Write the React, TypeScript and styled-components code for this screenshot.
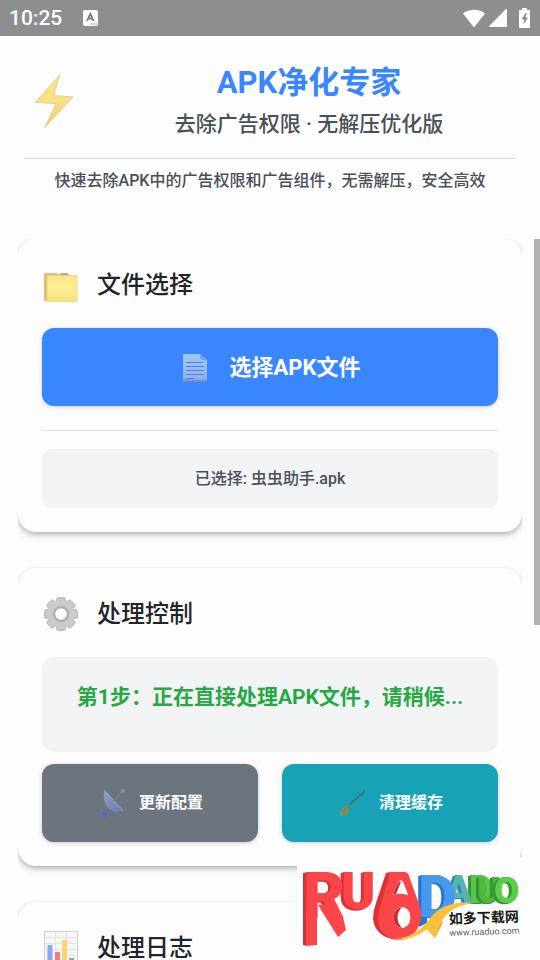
import React from "react";
import styled, { createGlobalStyle, css } from "styled-components";

const GlobalStyle = createGlobalStyle`
  * { box-sizing: border-box; }
  html, body { margin: 0; background: #fdfdfd; }
  body, button {
    font-family: Roboto, "Noto Sans CJK SC", sans-serif;
    color: #212529;
  }
  h1, h2, p { margin: 0; }
`;

const Page = styled.div`
  display: flex;
  flex-direction: column;
  height: 100vh;
  overflow: hidden;
`;

const StatusBar = styled.div`
  display: flex;
  align-items: center;
  height: 36px;
  flex: none;
  padding: 0 10px 0 9px;
  background: #8d8e8f;
  color: #fff;
`;

const Clock = styled.span`
  flex: none;
  margin-right: 21px;
  font-size: 21px;
  line-height: 36px;
  font-weight: 500;
`;

const StatusIcons = styled.div`
  display: flex;
  align-items: center;
  gap: 4px;
  margin-left: auto;
`;

const Header = styled.header`
  flex: none;
  padding: 25px 24px 46px;
`;

const Brand = styled.div`
  display: flex;
  align-items: center;
  padding-bottom: 15px;
  border-bottom: 1px solid #dcddde;
`;

const BrandText = styled.div`
  flex: 1;
  text-align: center;
  padding-left: 18px;
`;

const AppTitle = styled.h1`
  font-size: 31px;
  line-height: 44px;
  font-weight: 700;
  color: #3a86ff;
`;

const Subtitle = styled.p`
  font-size: 21px;
  line-height: 38px;
  font-weight: 500;
  color: #495057;
`;

const Intro = styled.p`
  padding-top: 10px;
  font-size: 16px;
  line-height: 24px;
  font-weight: 500;
  text-align: center;
  color: #495057;
`;

const ScrollArea = styled.div`
  display: flex;
  flex: 1;
  min-height: 0;
  gap: 12px;
  padding-left: 18px;
`;

const Cards = styled.main`
  display: flex;
  flex-direction: column;
  flex: 1;
  gap: 36px;
  overflow: hidden;
`;

const Scrollbar = styled.div`
  display: flex;
  width: 6px;
`;

const Thumb = styled.div`
  flex: 1;
  height: 386px;
  background: #b1b1b1;
`;

const Card = styled.section`
  flex: none;
  padding: 24px;
  border-radius: 18px;
  background: #fdfdfd;
  box-shadow: 0 2px 4px rgba(0, 0, 0, 0.2), 0 4px 8px rgba(0, 0, 0, 0.12);
`;

const CardHeader = styled.div`
  display: flex;
  align-items: center;
  gap: 17px;
  height: 44px;
  margin-bottom: 21px;
`;

const CardTitle = styled.h2`
  font-size: 24px;
  line-height: 36px;
  font-weight: 500;
`;

const tones = { primary: "#3a86ff", muted: "#6c757d", info: "#17a2b8" };

const ActionButton = styled.button<{ $tone: keyof typeof tones; $large?: boolean }>`
  display: flex;
  align-items: center;
  justify-content: center;
  gap: ${(p) => (p.$large ? 20 : 12)}px;
  width: 100%;
  height: 78px;
  padding: 0 12px;
  border: 0;
  border-radius: 12px;
  background: ${(p) => tones[p.$tone]};
  color: #fff;
  font-size: ${(p) => (p.$large ? 22 : 16)}px;
  font-weight: 700;
  box-shadow: 0 1px 4px rgba(0, 0, 0, 0.2);
`;

const ButtonLabel = styled.span`
  padding-bottom: 4px;
`;

const Divider = styled.hr`
  height: 1px;
  margin: 24px 0 18px;
  border: 0;
  background: #dfe1e3;
`;

const Notice = styled.div<{ $progress?: boolean }>`
  border-radius: 9px;
  background: #f1f3f5;
  padding: 18px 12px;
  font-size: 16px;
  line-height: 23px;
  font-weight: 500;
  text-align: center;
  color: #495057;
  ${(p) =>
    p.$progress &&
    css`
      min-height: 95px;
      margin-bottom: 12px;
      padding: 24px 12px;
      border-radius: 12px;
      font-size: 21px;
      line-height: 32px;
      font-weight: 700;
      color: #28a745;
    `}
`;

const ButtonRow = styled.div`
  display: grid;
  grid-template-columns: 1fr 1fr;
  gap: 24px;
`;

const Watermark = styled.div`
  position: fixed;
  right: 0;
  bottom: 0;
  background: #fdfdfd;
  line-height: 0;
`;

const InputIcon = () => (
  <svg width="15" height="16" viewBox="0 0 15 16" aria-hidden="true">
    <rect width="15" height="16" rx="2" fill="#fff" />
    <path d="M4 11 7.3 3.8 10.6 11M5.2 8.6h4.2" fill="none" stroke="#77797b" strokeWidth="1.7" />
    <path d="M8 14h1.4M10.4 14h1.4M12.7 14h1.2" stroke="#77797b" strokeWidth="1.2" />
  </svg>
);

const WifiIcon = () => (
  <svg width="22" height="19" viewBox="0 0 22 19" aria-hidden="true">
    <path d="M0 4.500C6-.5 16-.5 22 4.500L11 18.500Z" fill="#fff" />
  </svg>
);

const SignalIcon = () => (
  <svg width="18" height="18" viewBox="0 0 18 18" aria-hidden="true">
    <path d="M17 0Q18 0 18 1v17H1Q-.5 18 .5 16.800Z" fill="#fff" />
  </svg>
);

const BatteryIcon = () => (
  <svg width="19" height="20" viewBox="0 0 19 20" aria-hidden="true">
    <path d="M11 0h5v2h2q1 0 1 1v16q0 1-1 1H9q-1 0-1-1V3q0-1 1-1h2Z" fill="#fff" />
    <path d="m14.800 5-4.300 6.200h2.700l-.8 5.300 4.600-7h-2.700l1.500-4.500Z" fill="#858789" />
  </svg>
);

const BoltIcon = () => (
  <svg width="60" height="60" viewBox="0 0 60 60" aria-hidden="true">
    <defs>
      <linearGradient id="bolt" x1="0" y1="0" x2="0" y2="1">
        <stop offset="0" stopColor="#f4ea72" />
        <stop offset=".5" stopColor="#fbdf85" />
        <stop offset="1" stopColor="#eccf63" />
      </linearGradient>
    </defs>
    <path d="M35.800 3 11.200 30.500 32 31.500 20.800 55.500 49 25 29.500 23.500Z" fill="url(#bolt)" stroke="#d9d2a0" strokeWidth="1" strokeLinejoin="round" />
  </svg>
);

const FolderIcon = () => (
  <svg width="38" height="38" viewBox="0 -2 38 38" aria-hidden="true">
    <defs>
      <linearGradient id="folder" x1="0" y1="0" x2="0" y2="1">
        <stop offset="0" stopColor="#fbe38b" />
        <stop offset=".5" stopColor="#fff094" />
        <stop offset="1" stopColor="#f8df7b" />
      </linearGradient>
    </defs>
    <path d="M2 6q0-1 2-1h10l3 1h9l1 3v24H3q-1 0-1-1Z" fill="#e6bd78" />
    <path d="M18 5h8l1 3H20Z" fill="#b7ab9c" />
    <path d="M5 8.500q0-1 1-1h28q1 0 1 1v24q0 1-1 1H5Z" fill="url(#folder)" stroke="#edcf75" strokeWidth=".7" />
  </svg>
);

const DocumentIcon = () => (
  <svg width="30" height="34" viewBox="0 -1 30 34" aria-hidden="true">
    <defs>
      <linearGradient id="document" x1="0" y1="0" x2="0" y2="1">
        <stop offset="0" stopColor="#a2c8fb" />
        <stop offset=".85" stopColor="#8fb6f4" />
        <stop offset="1" stopColor="#6787bf" />
      </linearGradient>
    </defs>
    <path d="M3 4q0-1 1-1h16l7 6v22H3Z" fill="url(#document)" />
    <path d="M20 3v4q0 2 2 2h5Z" fill="#6fa1ef" />
    <path d="M6 11.500h17M6 15.500h18M6 19.500h18M6 23.500h18M6 27.500h8" stroke="#587ed1" strokeWidth="1.100" />
  </svg>
);

const GearIcon = () => (
  <svg width="38" height="38" viewBox="0 0 38 38" aria-hidden="true">
    <g fill="#c9c9c9" stroke="#acacac" strokeWidth=".8">
      {[0, 45, 90, 135].map((a) => (
        <rect key={a} x="14.500" y="2.500" width="9" height="33" rx="2" transform={`rotate(${a} 19 19)`} />
      ))}
    </g>
    <circle cx="19" cy="19" r="10" fill="none" stroke="#cbcbcb" strokeWidth="7" />
    <circle cx="19" cy="19" r="7" fill="#fdfdfd" stroke="#b0b0b0" strokeWidth="2.500" />
  </svg>
);

const DishIcon = () => (
  <svg width="30" height="34" viewBox="0 0 30 34" aria-hidden="true">
    <defs>
      <linearGradient id="dish" x1="0" y1="0" x2="1" y2="1">
        <stop offset="0" stopColor="#949eb5" />
        <stop offset="1" stopColor="#6879b6" />
      </linearGradient>
    </defs>
    <path d="m5 24 5 1 3 6H2l1-4Z" fill="#6672a8" />
    <path d="M7.500 4Q5 14 11 22q7 6 16 3Z" fill="url(#dish)" />
    <path d="m8 5 18 20" stroke="#99a2be" strokeWidth="1" />
    <path d="m15 16 11-11" stroke="#838bab" strokeWidth="1" />
    <circle cx="26" cy="5" r="1.800" fill="#8790ad" />
    <path d="m5 27 4 1v3" stroke="#4e5695" fill="none" />
  </svg>
);

const BroomIcon = () => (
  <svg width="30" height="34" viewBox="0 0 30 34" aria-hidden="true">
    <path d="m12 19 16-14" stroke="#50665d" strokeWidth="1.500" />
    <path d="m9 19 4 5-4 6-3-1-3 1v-4Z" fill="#889657" />
    <path d="m9 19 4 5M9 21l-4 6M11 23l-4 6" stroke="#5e7d58" strokeWidth="1" />
  </svg>
);

const ChartIcon = () => (
  <svg width="38" height="38" viewBox="0 0 38 38" aria-hidden="true">
    <rect x="2.500" y="2.500" width="33" height="33" fill="#f7f7f7" stroke="#d2d2d2" />
    <path d="M13.500 3v32M24.500 3v32M3 8.500h32M3 14.500h32M3 20.500h32M3 26.500h32" stroke="#e3e3e3" />
    <path d="M5.500 16h5v19h-5Z" fill="#86a8ec" />
    <path d="M13 23h5v12h-5Z" fill="#f07e78" />
    <path d="M20 11h5v24h-5Z" fill="#f7d774" />
    <path d="M27 29h5v6h-5Z" fill="#74b997" />
  </svg>
);

const BlockLetter = styled.text<{ $side: string; $size: number }>`
  font-family: Roboto, sans-serif;
  font-weight: 900;
  font-size: ${(p) => p.$size}px;
  filter: drop-shadow(-1px 0 0 ${(p) => p.$side}) drop-shadow(-2px 1px 0 ${(p) => p.$side});
`;

const SiteLogo = () => (
  <svg width="243" height="103" viewBox="0 0 243 103" role="img" aria-label="RUADADUO">
    <BlockLetter x="172" y="46" $size={38} $side="#37972f" fill="#5bc54b">D</BlockLetter>
    <BlockLetter x="180" y="46" $size={36} $side="#37972f" fill="#4eb83f">U</BlockLetter>
    <BlockLetter x="197" y="46" $size={37} $side="#37972f" fill="#5dcc4c">O</BlockLetter>
    <BlockLetter x="149" y="46" $size={38} $side="#3482bb" fill="#54b6aa">A</BlockLetter>
    <path d="M122 40h8v26l-8 4Z" fill="#2875cb" />
    <BlockLetter x="121" y="60" $size={60} $side="#2875cb" fill="#4798ef">D</BlockLetter>
    <BlockLetter x="44" y="52" $size={52} $side="#d93338" fill="#fb4548">U</BlockLetter>
    <path d="M6 16h4v73l-4-1Z" fill="#cf3036" />
    <BlockLetter x="6" y="61" $size={65} $side="#d93338" fill="#fb4548">R</BlockLetter>
    <path d="M9 55h11v33l-11 1Z" fill="#fb4548" />
    <path d="M21 48 41 80 49 73 46 60 36 46Z" fill="#fb4548" />
    <path d="M89 16 93 15 100 83Q78 80 76 62 76 54 79 46Z" fill="#d93338" />
    <path fillRule="evenodd" d="M93 15h14q4 0 5 4l10 28q4 10 1 19-6 17-22 17-18-2-20-20 0-8 3-16l8-28q0-4 1-4ZM102 25l-7 13q8-3 16 0l-5-13q-2-3-4 0ZM105 50c-11 1-11 20 0 21 11-1 11-20 0-21Z" fill="#fb4548" />
    <path d="M102 25 95 38q8-3 16 0l-5-13q-2-3-4 0Z" fill="#fdfdfd" />
    <path d="M105 50c-11 1-11 20 0 21 11-1 11-20 0-21Z" fill="#fdfdfd" />
    <path d="M105 50c-11 1-11 20 0 21-6-6-6-15 0-21ZM102 25 95 38l4-1 5-12Z" fill="#c92e34" />
    <path d="m129 71 9 10 8-16Z" fill="#e59b25" />
    <path d="M96 82Q119 81 133 61 148 43 176 46 155 49 146 62L138 80 130 72Q114 85 96 82Z" fill="#fbc13c" />
    <g transform="rotate(-2 152 67)">
      <text x="152" y="67" fontFamily='"Noto Sans CJK SC", sans-serif' fontWeight="700" fontSize="14" fill="#171717">如多下载网</text>
      <text x="152" y="79" fontFamily="Roboto, sans-serif" fontSize="9" fill="#606060">www.ruaduo.com</text>
    </g>
  </svg>
);

export default function App() {
  return (
    <>
      <GlobalStyle />
      <Page>
        <StatusBar>
          <Clock>10:25</Clock>
          <InputIcon />
          <StatusIcons>
            <WifiIcon />
            <SignalIcon />
            <BatteryIcon />
          </StatusIcons>
        </StatusBar>
        <Header>
          <Brand>
            <BoltIcon />
            <BrandText>
              <AppTitle>APK净化专家</AppTitle>
              <Subtitle>去除广告权限 · 无解压优化版</Subtitle>
            </BrandText>
          </Brand>
          <Intro>快速去除APK中的广告权限和广告组件，无需解压，安全高效</Intro>
        </Header>
        <ScrollArea>
          <Cards>
            <Card>
              <CardHeader>
                <FolderIcon />
                <CardTitle>文件选择</CardTitle>
              </CardHeader>
              <ActionButton type="button" $tone="primary" $large>
                <DocumentIcon />
                <ButtonLabel>选择APK文件</ButtonLabel>
              </ActionButton>
              <Divider />
              <Notice>已选择: 虫虫助手.apk</Notice>
            </Card>
            <Card>
              <CardHeader>
                <GearIcon />
                <CardTitle>处理控制</CardTitle>
              </CardHeader>
              <Notice $progress role="status">第1步：正在直接处理APK文件，请稍候...</Notice>
              <ButtonRow>
                <ActionButton type="button" $tone="muted">
                  <DishIcon />
                  <ButtonLabel>更新配置</ButtonLabel>
                </ActionButton>
                <ActionButton type="button" $tone="info">
                  <BroomIcon />
                  <ButtonLabel>清理缓存</ButtonLabel>
                </ActionButton>
              </ButtonRow>
            </Card>
            <Card>
              <CardHeader>
                <ChartIcon />
                <CardTitle>处理日志</CardTitle>
              </CardHeader>
            </Card>
          </Cards>
          <Scrollbar>
            <Thumb />
          </Scrollbar>
        </ScrollArea>
      </Page>
      <Watermark>
        <SiteLogo />
      </Watermark>
    </>
  );
}
